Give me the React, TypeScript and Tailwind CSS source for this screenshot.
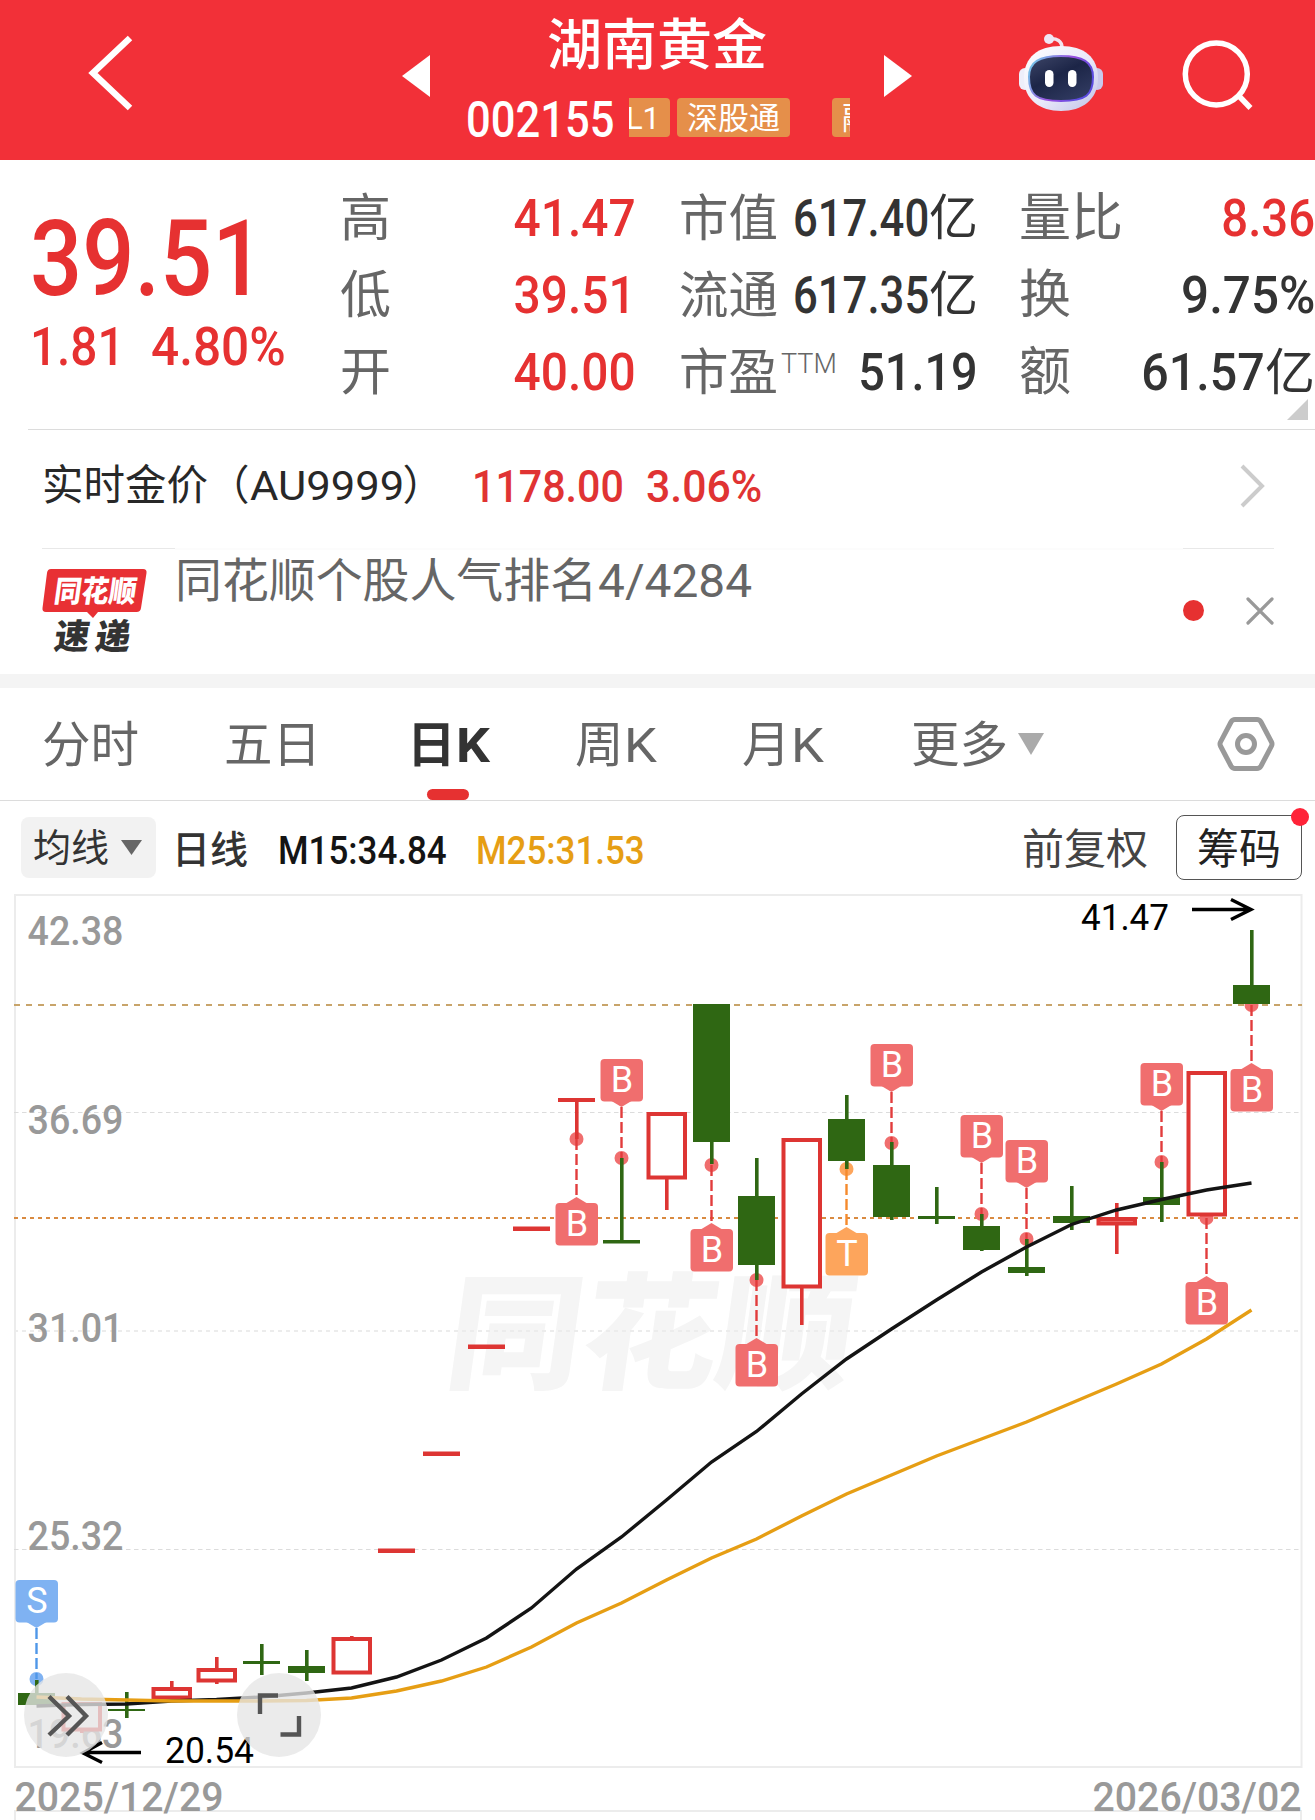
import type { ReactNode } from 'react';

const RED = '#dd3533';
const GREEN = '#2f6713';

// one candle per trading day, y values in chart units
const candles = [
  { up: false, high: 1680, top: 1693, bottom: 1705, low: 1705 },
  { up: true, high: 1702, top: 1702, bottom: 1731, low: 1733 },
  { up: false, high: 1692, top: 1709, bottom: 1711, low: 1718 },
  { up: true, high: 1681, top: 1687, bottom: 1699, low: 1699 },
  { up: true, high: 1657, top: 1668, bottom: 1682, low: 1684 },
  { up: false, high: 1644, top: 1661, bottom: 1664, low: 1675 },
  { up: false, high: 1650, top: 1666, bottom: 1673, low: 1681 },
  { up: true, high: 1636, top: 1637, bottom: 1674, low: 1674 },
  { up: true, high: 1548.5, top: 1548.5, bottom: 1553, low: 1553 },
  { up: true, high: 1451.5, top: 1451.5, bottom: 1456, low: 1456 },
  { up: true, high: 1344.5, top: 1344.5, bottom: 1349, low: 1349 },
  { up: true, high: 1226.5, top: 1226.5, bottom: 1231, low: 1231 },
  { up: true, high: 1098, top: 1098, bottom: 1102, low: 1139 },
  { up: false, high: 1158, top: 1240, bottom: 1243.5, low: 1243.5 },
  { up: true, high: 1112, top: 1112, bottom: 1179, low: 1210 },
  { up: false, high: 1004, top: 1004, bottom: 1142, low: 1164 },
  { up: false, high: 1158, top: 1196, bottom: 1265, low: 1280 },
  { up: true, high: 1138, top: 1138, bottom: 1288, low: 1325 },
  { up: false, high: 1095, top: 1119, bottom: 1161, low: 1169 },
  { up: false, high: 1142, top: 1165, bottom: 1217, low: 1220 },
  { up: false, high: 1187, top: 1216, bottom: 1219, low: 1224 },
  { up: false, high: 1214, top: 1226, bottom: 1250, low: 1251 },
  { up: false, high: 1239, top: 1267, bottom: 1273, low: 1276 },
  { up: false, high: 1186, top: 1216, bottom: 1223, low: 1230 },
  { up: true, high: 1203, top: 1217, bottom: 1225, low: 1254 },
  { up: false, high: 1162, top: 1197, bottom: 1205, low: 1222 },
  { up: true, high: 1071, top: 1071, bottom: 1216, low: 1216 },
  { up: false, high: 930, top: 985, bottom: 1004, low: 1004 },
];

const markers = [
  { i: 0, y: 1679, side: 'above', text: 'S' },
  { i: 12, y: 1139, side: 'below', text: 'B' },
  { i: 13, y: 1158, side: 'above', text: 'B' },
  { i: 15, y: 1165, side: 'below', text: 'B' },
  { i: 16, y: 1280, side: 'below', text: 'B' },
  { i: 18, y: 1169, side: 'below', text: 'T' },
  { i: 19, y: 1143, side: 'above', text: 'B' },
  { i: 21, y: 1214, side: 'above', text: 'B' },
  { i: 22, y: 1239, side: 'above', text: 'B' },
  { i: 25, y: 1162, side: 'above', text: 'B' },
  { i: 26, y: 1218, side: 'below', text: 'B' },
  { i: 27, y: 1005, side: 'below', text: 'B' },
];

const markerColors: Record<string, { fill: string; line: string }> = {
  B: { fill: '#f06e6e', line: '#e23c3c' },
  T: { fill: '#fda55c', line: '#f58a2c' },
  S: { fill: '#7fb2f2', line: '#4f97e8' },
};

const ma15 = [
  1706, 1704.5, 1704, 1701, 1699.5, 1697, 1693, 1688, 1677, 1660, 1638, 1608, 1569, 1537, 1500, 1462, 1431.5,
  1394, 1359, 1329, 1300, 1272, 1247, 1224.5, 1210, 1199.5, 1190, 1183,
];
const ma25 = [
  1697, 1699, 1700, 1701, 1701, 1701, 1700.5, 1698, 1691, 1681, 1667, 1647, 1623, 1603, 1580, 1558, 1539, 1516,
  1494, 1475, 1456, 1439, 1422, 1403, 1384, 1364, 1339, 1310,
];

const axis = [
  { label: '42.38', y: 945 },
  { label: '36.69', y: 1134 },
  { label: '31.01', y: 1342 },
  { label: '25.32', y: 1550 },
  { label: '19.63', y: 1748 },
];

const cx = (i: number) => 36.5 + i * 45;
const toPoints = (ys: number[]) => ys.map((y, i) => `${cx(i)},${y}`).join(' ');

function Candle({ i }: { i: number }) {
  const c = candles[i];
  const x = cx(i);
  const h = c.bottom - c.top;
  const hollow = c.up && h > 5;
  const color = c.up ? RED : GREEN;
  return (
    <g>
      {c.high < c.top && <rect x={x - 1.5} y={c.high} width="3.6" height={c.top - c.high} fill={color} />}
      {c.low > c.bottom && <rect x={x - 1.5} y={c.bottom} width="3.6" height={c.low - c.bottom} fill={color} />}
      {hollow ? (
        <rect x={x - 18} y={c.top + 2} width="36.5" height={h - 3.5} fill={h < 10 ? '#f98f8f' : '#fff'} stroke={color} strokeWidth="4" />
      ) : (
        <rect x={x - 18.5} y={c.top} width="37" height={h} fill={color} />
      )}
    </g>
  );
}

function Marker({ i, y, side, text }: { i: number; y: number; side: string; text: string }) {
  const x = cx(i);
  const { fill, line } = markerColors[text];
  const above = side === 'above';
  const top = above ? y - 99 : y + 64;
  const tip = above ? top + 48 : top - 6;
  const base = above ? top + 42 : top;
  return (
    <g>
      <circle cx={x} cy={y} r="7" fill={fill} />
      <line x1={x} x2={x} y1={above ? tip : y} y2={above ? y : tip} stroke={line} strokeWidth="2.4" strokeDasharray="11 4" />
      <rect x={x - 21} y={top} width="42.5" height="42.5" rx="4" fill={fill} />
      <path d={`M${x - 10} ${base}L${x} ${tip}L${x + 10} ${base}z`} fill={fill} />
      <text x={x + 0.5} y={top + 33} textAnchor="middle" fontSize="36" fill="#fff">
        {text}
      </text>
    </g>
  );
}

function KLineChart() {
  return (
    <svg className="block h-[935px] w-full font-['Roboto','Noto_Sans_CJK_SC',sans-serif]" viewBox="0 885 1315 935">
      {/* 水印 */}
      <text x="0" y="0" transform="translate(442 1379) skewX(-8)" fontSize="126" fontWeight="900" fill="#f5f5f5" textLength="406" lengthAdjust="spacingAndGlyphs" className="font-['Noto_Sans_CJK_SC',sans-serif]">
        同花顺
      </text>

      <rect x="15" y="895" width="1286.5" height="872" fill="none" stroke="#ececec" strokeWidth="2" />
      <path d="M15 1820V1811H1301V1820" fill="none" stroke="#ececec" strokeWidth="2" />
      <line x1="14" x2="1301" y1="1112.5" y2="1112.5" stroke="#dcdcdc" strokeWidth="1.2" strokeDasharray="4.5 3.5" />
      <line x1="14" x2="1301" y1="1331" y2="1331" stroke="#ececec" strokeWidth="2" strokeDasharray="4 4" />
      <line x1="14" x2="1301" y1="1549.5" y2="1549.5" stroke="#dcdcdc" strokeWidth="1.2" strokeDasharray="4.5 3.5" />
      <line x1="14" x2="1302" y1="1005" y2="1005" stroke="#c8a46a" strokeWidth="2" strokeDasharray="6 6" />
      <line x1="14" x2="1301" y1="1218" y2="1218" stroke="#d98a40" strokeWidth="2" strokeDasharray="4 4" />

      {axis.map((a) => (
        <text key={a.label} x="27.5" y={a.y} fontSize="41.5" fontWeight="500" fill="#999" textLength="96" lengthAdjust="spacingAndGlyphs">
          {a.label}
        </text>
      ))}

      {markers.map((m) => (
        <Marker key={m.i} {...m} />
      ))}
      {candles.map((_, i) => (
        <Candle key={i} i={i} />
      ))}

      <polyline points={toPoints(ma15)} fill="none" stroke="#141414" strokeWidth="3.4" />
      <polyline points={toPoints(ma25)} fill="none" stroke="#e69e14" strokeWidth="3.4" />

      {/* 最高 / 最低价 */}
      <g fill="none" stroke="#000" strokeWidth="3.4">
        <path d="M1192 909.5H1250M1231 899.5L1251 909.5L1231 919.5" />
        <path d="M141 1752.5H84M102 1742.5L83 1753L102 1762.5" />
      </g>
      <text x="1081" y="930" fontSize="36.5" textLength="88" lengthAdjust="spacingAndGlyphs">41.47</text>
      <text x="165" y="1763" fontSize="36.5" textLength="89" lengthAdjust="spacingAndGlyphs">20.54</text>

      <g fill="#e6e6e6" fillOpacity="0.78">
        <circle cx="66" cy="1715" r="42" />
        <circle cx="279" cy="1715" r="42" />
      </g>
      <g fill="none" stroke="#555" strokeWidth="4.4">
        <path d="M49 1696.5L69 1716L49 1735M67 1696.5L86 1716L67 1735" />
        <path d="M278 1695.5H260V1714M299 1716V1734.5H280.5" />
      </g>

      <g fontSize="41.5" fontWeight="500" fill="#999">
        <text x="14.5" y="1811" textLength="209" lengthAdjust="spacingAndGlyphs">2025/12/29</text>
        <text x="1092.5" y="1811" textLength="209" lengthAdjust="spacingAndGlyphs">2026/03/02</text>
      </g>
    </svg>
  );
}

function Robot() {
  return (
    <svg className="mt-[33px] h-[79px] w-[86px]" viewBox="0 0 86 79">
      <defs>
        <linearGradient id="shell" x1="0" y1="0" x2="1" y2="1">
          <stop offset="0" stopColor="#ffffff" />
          <stop offset="0.55" stopColor="#e9e9fa" />
          <stop offset="1" stopColor="#bfc0e6" />
        </linearGradient>
        <linearGradient id="rim" x1="0" y1="0" x2="1" y2="0.4">
          <stop offset="0" stopColor="#6fd6e8" />
          <stop offset="0.6" stopColor="#9a4fe0" />
          <stop offset="1" stopColor="#5a4be0" />
        </linearGradient>
        <linearGradient id="visor" x1="0" y1="0" x2="0.7" y2="1">
          <stop offset="0" stopColor="#3e4668" />
          <stop offset="0.5" stopColor="#1c2547" />
          <stop offset="1" stopColor="#303a60" />
        </linearGradient>
      </defs>
      <path d="M31 6C39 5 44 8 44 15" fill="none" stroke="#f3e3ef" strokeWidth="3.5" />
      <circle cx="31" cy="6" r="5" fill="#efe6f5" />
      <rect x="1" y="35" width="12" height="22" rx="6" fill="#eeeefa" />
      <rect x="73" y="35" width="12" height="22" rx="6" fill="#c9c9ec" />
      <path d="M43 13C66 13 80 24 80 45C80 67 64 78 43 78C22 78 6 67 6 45C6 24 20 13 43 13Z" fill="url(#shell)" />
      <path d="M43 23C65 23 75 29 75 44C75 62 68 68 43 68C18 68 11 62 11 44C11 29 21 23 43 23Z" fill="url(#visor)" stroke="url(#rim)" strokeWidth="2" />
      <rect x="27" y="37" width="8.500" height="17" rx="4.200" fill="#fff" />
      <rect x="50" y="37" width="8.500" height="17" rx="4.200" fill="#fff" />
    </svg>
  );
}

function Header() {
  return (
    <header className="flex h-[160px] shrink-0 items-start bg-[#f23038] text-white">
      <svg className="mt-[34px] ml-[86px] h-[78px] w-[48px]" viewBox="0 0 48 78" fill="none" stroke="#fff" strokeWidth="6.5">
        <path d="M44 4L7 39L44 74" />
      </svg>
      <svg className="mt-[55px] ml-[268px] h-[42px] w-[28px]" viewBox="0 0 28 42" fill="#fff">
        <path d="M28 0V42L0 21z" />
      </svg>
      <div className="w-[454px]">
        <h1 className="mt-[7px] text-center text-[55px] leading-[76px] font-medium">湖南黄金</h1>
        <div className="mt-[15px] flex h-[39px] pl-[36px]">
          <span className="w-[163px] origin-left scale-x-[0.88] text-[49.5px] leading-[44px] font-medium">002155</span>
          <div className="flex w-[221px] overflow-hidden text-[31px] leading-[41px]">
            <span className="-ml-[14px] w-[55px] shrink-0 rounded bg-[#e58f4a] pr-[10px] text-right">L1</span>
            <span className="ml-[7px] w-[113px] shrink-0 rounded bg-[#e58f4a] text-center">深股通</span>
            <span className="ml-[42px] w-[60px] shrink-0 rounded bg-[#e58f4a] pl-[10px]">融</span>
          </div>
        </div>
      </div>
      <svg className="mt-[55px] h-[42px] w-[28px]" viewBox="0 0 28 42" fill="#fff">
        <path d="M0 0V42L28 21z" />
      </svg>
      <div className="ml-[106px]">
        <Robot />
      </div>
      <svg className="mt-[38px] ml-[76px] h-[74px] w-[74px]" viewBox="0 0 74 74" fill="none" stroke="#fff" strokeWidth="5.5">
        <circle cx="36.3" cy="36" r="31" />
        <path d="M58 57L70.500 70" />
      </svg>
    </header>
  );
}

function Stat({ label, sup, children }: { label: string; sup?: string; children: ReactNode }) {
  return (
    <div className="flex h-[77px] items-center justify-between pt-[3px] whitespace-nowrap">
      <dt className="flex leading-[74px] text-[#666]">
        {label}
        {sup && <sup className="top-0 pl-[3px] text-[27px] leading-[57px] font-light">{sup}</sup>}
      </dt>
      <dd className="flex text-[52px] leading-[74px] font-medium">{children}</dd>
    </div>
  );
}

function Quote() {
  return (
    <section className="relative flex h-[269px] shrink-0 pt-[19px] text-[#333]">
      <div className="w-[340px] pl-[30px] font-medium text-[#e63131]">
        <div className="mt-[22px] origin-left scale-x-[0.875] text-[105px] leading-[118px]">39.51</div>
        <div className="-mt-[3px] flex h-[62px] text-[53px] leading-[62px]">
          <span className="w-[121px] origin-left scale-x-[0.9]">1.81</span>
          <span className="origin-left scale-x-[0.935]">4.80%</span>
        </div>
      </div>
      <dl className="w-[296px] text-[51px]">
        <Stat label="高"><span className="origin-right scale-x-[0.92] text-[#e63131]">41.47</span></Stat>
        <Stat label="低"><span className="origin-right scale-x-[0.92] text-[#e63131]">39.51</span></Stat>
        <Stat label="开"><span className="origin-right scale-x-[0.92] text-[#e63131]">40.00</span></Stat>
      </dl>
      <dl className="ml-[43px] w-[299px] text-[49.5px]">
        <Stat label="市值"><span className="-ml-[25px] origin-right scale-x-[0.84]">617.40</span><span className="text-[49px] font-normal">亿</span></Stat>
        <Stat label="流通"><span className="-ml-[25px] origin-right scale-x-[0.84]">617.35</span><span className="text-[49px] font-normal">亿</span></Stat>
        <Stat label="市盈" sup="TTM"><span className="origin-right scale-x-[0.9]">51.19</span></Stat>
      </dl>
      <dl className="ml-[41px] w-[296px] text-[52px]">
        <Stat label="量比"><span className="origin-right scale-x-[0.91] text-[#e63131]">8.36</span></Stat>
        <Stat label="换"><span className="origin-right scale-x-[0.95]">9.75%</span></Stat>
        <Stat label="额"><span className="origin-right scale-x-[0.93]">61.57</span><span className="text-[50px] font-normal">亿</span></Stat>
      </dl>
      <svg className="absolute right-[7px] bottom-[9px] h-[21px] w-[21px]" viewBox="0 0 21 21" fill="#ccc">
        <path d="M21 0V21H0z" />
      </svg>
    </section>
  );
}

function GoldRow() {
  return (
    <section className="ml-[28px] flex h-[119px] shrink-0 items-center border-t border-[#dcdcdc] pb-[6px] pl-[14px] whitespace-nowrap">
      <span className="w-[430px] text-[41.5px] leading-[60px] text-[#282828]">
        实时金价（<span className="inline-block w-[153px] origin-left scale-x-[1.05]">AU9999</span>）
      </span>
      <span className="w-[174px] origin-left scale-x-[0.915] pt-[2px] text-[45px] leading-[60px] font-medium text-[#e03333]">1178.00</span>
      <span className="origin-left scale-x-[0.95] pt-[2px] text-[45px] leading-[60px] font-medium text-[#e03333]">3.06%</span>
      <svg className="mr-[50px] ml-auto h-[44px] w-[25px]" viewBox="0 0 25 44" fill="none" stroke="#ccc" strokeWidth="4">
        <path d="M2 2L22 22L2 42" />
      </svg>
    </section>
  );
}

function NewsRow() {
  return (
    <section className="flex h-[126px] shrink-0 pr-[41px] pl-[42px]">
      <div className="w-[133px] border-t border-[#e8e8e8]">
        <svg className="mt-[20px] h-[90px] w-[105px] overflow-visible font-['Noto_Sans_CJK_SC',sans-serif]" viewBox="0 0 105 90">
          <path d="M9 0H101Q105 0 104.500 4L99 39Q98.500 43 94.500 43H56L51 49L45 43H4Q0 43 0.500 39L5 4Q5.500 0 9 0Z" fill="#e83034" />
          <text x="0" y="0" transform="translate(11 33) skewX(-8)" fontSize="30" fontWeight="900" fill="#fff" textLength="82" lengthAdjust="spacingAndGlyphs">同花顺</text>
          <text x="0" y="0" transform="translate(11 80) skewX(-8)" fontSize="35" fontWeight="900" fill="#333" textLength="35" lengthAdjust="spacingAndGlyphs">速</text>
          <text x="0" y="0" transform="translate(52 80) skewX(-8)" fontSize="35" fontWeight="900" fill="#333" textLength="35" lengthAdjust="spacingAndGlyphs">递</text>
        </svg>
      </div>
      <p className="flex-1 border-t-2 border-[#fcfcfc] text-[46.9px] leading-[62px] whitespace-nowrap text-[#666]">
        同花顺个股人气排名<span className="ml-px inline-block origin-left scale-x-[1.02]">4/4284</span>
      </p>
      <div className="flex h-[124px] w-[91px] items-center justify-between border-t border-[#e8e8e8]">
        <i className="size-[21px] rounded-full bg-[#e63131]" />
        <svg className="size-[28px]" viewBox="0 0 28 28" fill="none" stroke="#999" strokeWidth="3.2" strokeLinecap="round">
          <path d="M2 2L26 26M26 2L2 26" />
        </svg>
      </div>
    </section>
  );
}

function Tabs() {
  return (
    <nav className="flex h-[113px] shrink-0 items-start border-b border-[#dcdcdc] pl-[42px] text-[48.5px] leading-[115px] whitespace-nowrap text-[#666]">
      <span className="w-[182px]">分时</span>
      <span className="w-[183px]">五日</span>
      <span className="flex w-[168px] flex-col font-bold text-[#333]">
        <span>日<span className="inline-block origin-left scale-x-[1.1]">K</span></span>
        <i className="-mt-[14px] ml-[20px] h-[11px] w-[42px] rounded-full bg-[#e63131]" />
      </span>
      <span className="w-[167px]">周<span className="inline-block origin-left scale-x-[1.08]">K</span></span>
      <span className="w-[169px]">月<span className="inline-block origin-left scale-x-[1.08]">K</span></span>
      <span>更多</span>
      <svg className="mt-[45px] ml-[10px] h-[22px] w-[26px]" viewBox="0 0 26 22" fill="#aaa">
        <path d="M0 0H26L13 22z" />
      </svg>
      <svg className="mt-[28px] mr-[40px] ml-auto h-[56px] w-[58px]" viewBox="0 0 58 56" fill="none" stroke="#999" strokeWidth="5">
        <path d="M18 3.500H40Q42.500 3.500 44 6L54.500 26Q55.500 28 54.500 30L44 50Q42.500 52.500 40 52.500H18Q15.500 52.500 14 50L3.500 30Q2.500 28 3.500 26L14 6Q15.500 3.500 18 3.500Z" />
        <circle cx="29" cy="28" r="8.500" />
      </svg>
    </nav>
  );
}

function IndicatorBar() {
  return (
    <section className="flex h-[84px] shrink-0 items-start pt-[16px] pr-[13px] pl-[21px] leading-[65px] whitespace-nowrap">
      <div className="flex h-[61px] w-[135px] items-center rounded-lg bg-[#f2f2f2] pt-[2px] pl-[12px] text-[38px] leading-[59px] text-[#333]">
        均线
        <svg className="mb-[2px] ml-[12px] h-[15px] w-[21px]" viewBox="0 0 21 15" fill="#666">
          <path d="M0 0H21L10.500 15z" />
        </svg>
      </div>
      <span className="ml-[16px] w-[106px] pt-px text-[38px] font-medium text-[#333]">日线</span>
      <span className="w-[198px] origin-left scale-x-[0.885] pt-px text-[39.5px] font-medium text-[#141414]">M15:34.84</span>
      <span className="origin-left scale-x-[0.885] pt-px text-[39.5px] font-medium text-[#e69e14]">M25:31.53</span>
      <span className="ml-auto text-[42px] text-[#444]">前复权</span>
      <div className="relative -mt-[2px] ml-[28px] h-[65px] w-[126px] rounded-lg border border-[#555] text-center text-[42px] leading-[67px] text-[#222]">
        筹码
        <i className="absolute -top-[8px] -right-[8px] size-[18px] rounded-full bg-[#ff2338]" />
      </div>
    </section>
  );
}

export default function App() {
  return (
    <div className="flex h-[1820px] w-[1315px] flex-col overflow-hidden bg-white font-['Roboto','Noto_Sans_CJK_SC',sans-serif]">
      <Header />
      <Quote />
      <GoldRow />
      <NewsRow />
      <div className="h-[14px] shrink-0 bg-[#f4f4f4]" />
      <Tabs />
      <IndicatorBar />
      <KLineChart />
    </div>
  );
}
